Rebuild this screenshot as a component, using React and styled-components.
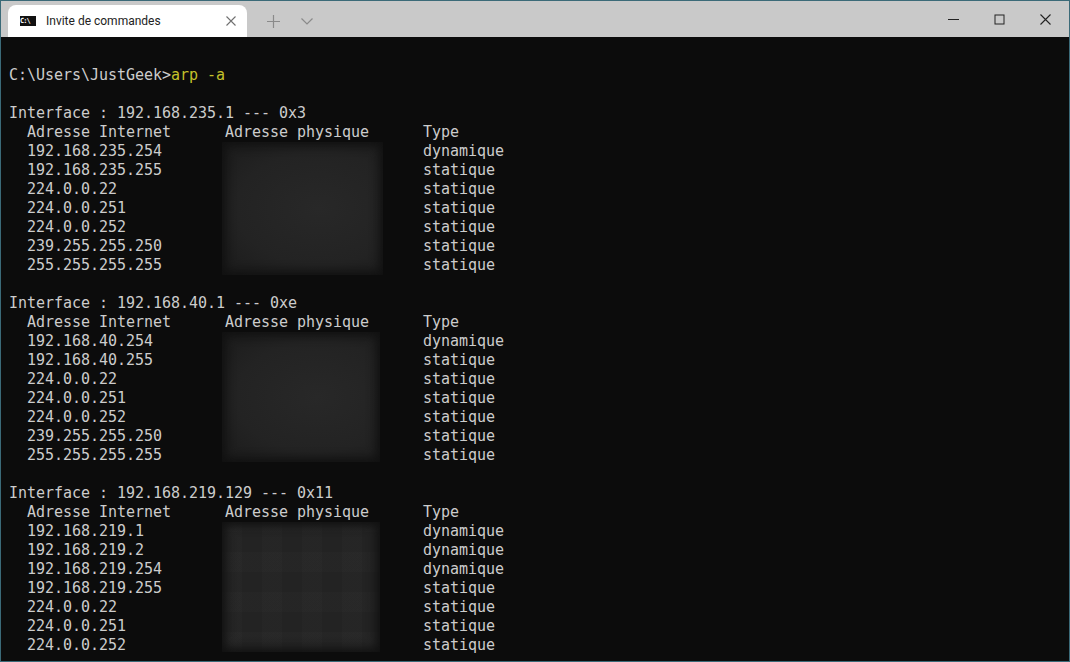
import styled, { createGlobalStyle } from "styled-components";

const sections = [
  {
    iface: "192.168.235.1 --- 0x3",
    mask: { width: 161, height: 133 },
    rows: [
      ["192.168.235.254", "dynamique"],
      ["192.168.235.255", "statique"],
      ["224.0.0.22", "statique"],
      ["224.0.0.251", "statique"],
      ["224.0.0.252", "statique"],
      ["239.255.255.250", "statique"],
      ["255.255.255.255", "statique"],
    ],
  },
  {
    iface: "192.168.40.1 --- 0xe",
    mask: { width: 158, height: 130 },
    rows: [
      ["192.168.40.254", "dynamique"],
      ["192.168.40.255", "statique"],
      ["224.0.0.22", "statique"],
      ["224.0.0.251", "statique"],
      ["224.0.0.252", "statique"],
      ["239.255.255.250", "statique"],
      ["255.255.255.255", "statique"],
    ],
  },
  {
    iface: "192.168.219.129 --- 0x11",
    mask: { width: 158, height: 130, grid: true },
    rows: [
      ["192.168.219.1", "dynamique"],
      ["192.168.219.2", "dynamique"],
      ["192.168.219.254", "dynamique"],
      ["192.168.219.255", "statique"],
      ["224.0.0.22", "statique"],
      ["224.0.0.251", "statique"],
      ["224.0.0.252", "statique"],
    ],
  },
];

export default function App() {
  return (
    <Window>
      <GlobalStyle />
      <TitleBar>
        <Tab>
          <CmdIcon>C:\</CmdIcon>
          <TabTitle>Invite de commandes</TabTitle>
          <IconButton>
            <svg width="10" height="10" viewBox="0 0 10 10">
              <path d="M0.5 0.5L9.5 9.5M9.5 0.5L0.5 9.5" stroke="#707070" strokeWidth="1.1" />
            </svg>
          </IconButton>
        </Tab>
        <TabActions>
          <svg width="13" height="13" viewBox="0 0 13 13">
            <path d="M6.5 0V13M0 6.5H13" stroke="#8a8a8a" strokeWidth="1.2" />
          </svg>
          <svg width="12" height="7" viewBox="0 0 12 7">
            <path d="M0.5 0.5L6 6L11.5 0.5" fill="none" stroke="#8a8a8a" strokeWidth="1.2" />
          </svg>
        </TabActions>
        <WindowControls>
          <svg width="11" height="11" viewBox="0 0 11 11">
            <path d="M0 5.5H11" stroke="#222" strokeWidth="1" />
          </svg>
          <svg width="11" height="11" viewBox="0 0 11 11">
            <rect x="1" y="1" width="9" height="9" fill="none" stroke="#222" strokeWidth="1" />
          </svg>
          <svg width="11" height="11" viewBox="0 0 11 11">
            <path d="M0.5 0.5L10.5 10.5M10.5 0.5L0.5 10.5" stroke="#222" strokeWidth="1.1" />
          </svg>
        </WindowControls>
      </TitleBar>
      <Terminal>
        <Line />
        <Line>
          C:\Users\JustGeek&gt;<Command>arp -a</Command>
        </Line>
        {sections.map((section) => (
          <Section key={section.iface}>
            <Line />
            <Line>Interface : {section.iface}</Line>
            <Row>
              <span>Adresse Internet</span>
              <span>Adresse physique</span>
              <span>Type</span>
            </Row>
            {section.rows.map(([ip, type]) => (
              <Row key={ip}>
                <span>{ip}</span>
                <span />
                <span>{type}</span>
              </Row>
            ))}
            <Mask
              $grid={section.mask.grid}
              style={{ width: section.mask.width, height: section.mask.height }}
            />
          </Section>
        ))}
      </Terminal>
    </Window>
  );
}

const GlobalStyle = createGlobalStyle`
  html, body {
    margin: 0;
    background: #0c0c0c;
    overflow: hidden;
  }
`;

const Window = styled.div`
  width: 1070px;
  height: 662px;
  box-sizing: border-box;
  border: 1px solid #3b6a78;
  display: flex;
  flex-direction: column;
  overflow: hidden;
  background: #0c0c0c;
`;

const TitleBar = styled.div`
  height: 36px;
  flex: none;
  display: flex;
  align-items: flex-end;
  background: #c9c9c9;
  padding-left: 7px;
`;

const Tab = styled.div`
  width: 239px;
  height: 32px;
  box-sizing: border-box;
  display: flex;
  align-items: center;
  padding: 0 11px 0 12px;
  background: #fff;
  border-radius: 8px 8px 0 0;
`;

const CmdIcon = styled.div`
  width: 16px;
  height: 10px;
  background: #111;
  color: #fff;
  font: bold 7px/10px "DejaVu Sans Mono", monospace;
  letter-spacing: -1px;
  overflow: hidden;
`;

const TabTitle = styled.div`
  margin-left: 10px;
  flex: 1;
  font: 12px Roboto, "Noto Sans", sans-serif;
  color: #222;
`;

const IconButton = styled.div`
  display: flex;
`;

const TabActions = styled.div`
  height: 32px;
  margin-left: 20px;
  display: flex;
  align-items: center;
  gap: 21px;
`;

const WindowControls = styled.div`
  margin-left: auto;
  height: 36px;
  display: flex;
  align-items: center;
  gap: 35px;
  padding-right: 18px;
`;

const Terminal = styled.div`
  flex: 1;
  padding: 10px 0 0 8px;
  background: #0c0c0c;
  color: #cccccc;
  font: 15px/19px "DejaVu Sans Mono", monospace;
  letter-spacing: -0.03px;
  white-space: pre;
  overflow: hidden;
`;

const Line = styled.div`
  height: 19px;
`;

const Command = styled.span`
  color: #c4c12a;
`;

const Section = styled.div`
  position: relative;
`;

const Row = styled.div`
  height: 19px;
  display: grid;
  grid-template-columns: 198px 198px auto;
  padding-left: 18px;
`;

// blurred patch hiding the MAC addresses
const Mask = styled.div`
  position: absolute;
  left: 213px;
  top: 57px;
  background: ${(p) =>
    p.$grid
      ? `repeating-linear-gradient(90deg, rgba(255,255,255,0.012) 0 20px, transparent 20px 40px),
         repeating-linear-gradient(0deg, rgba(255,255,255,0.01) 0 20px, transparent 20px 40px),
         #232323`
      : `radial-gradient(ellipse at 60% 50%, #282828 0%, #232323 60%, #1b1b1b 100%)`};
  box-shadow: inset 0 0 10px 4px #111;
`;
